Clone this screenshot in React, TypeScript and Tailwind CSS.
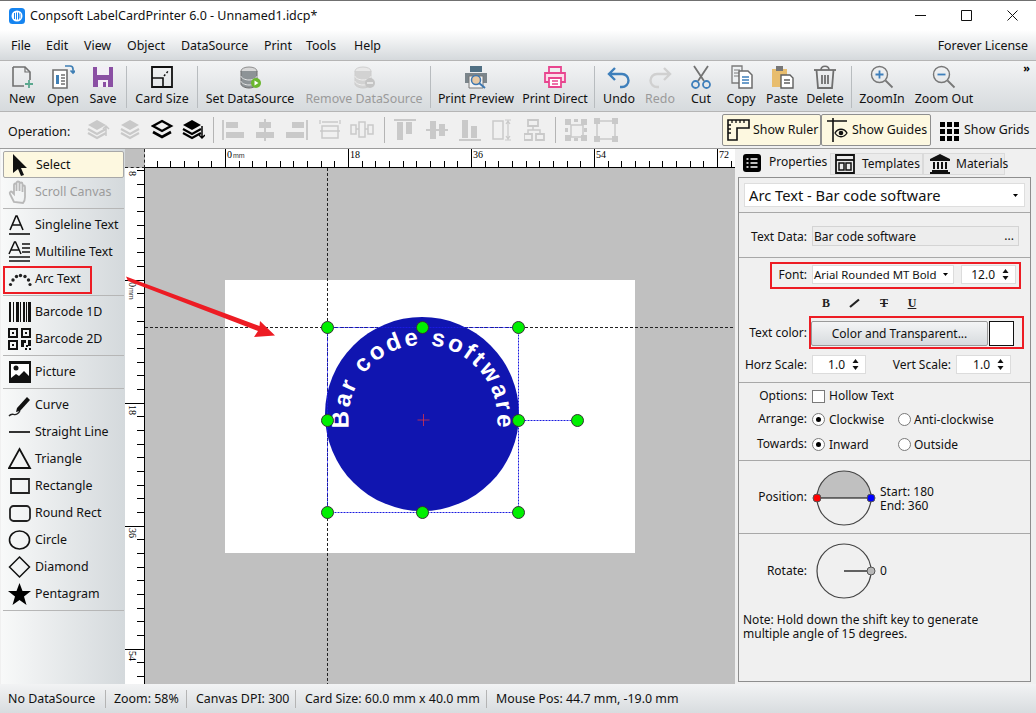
import type { ReactNode } from "react";

const DIS = "#c9c9c9";

function Ico({ w = 24, h = 24, children }: { w?: number; h?: number; children: ReactNode }) {
  return (
    <svg width={w} height={h} viewBox={`0 0 ${w} ${h}`} fill="none" className="shrink-0">
      {children}
    </svg>
  );
}

/* main toolbar icons */
const toolIcons: Record<string, ReactNode> = {
  new: (
    <>
      <path d="M3 2h12l5 5v8M3 2v19h11" stroke="#707070" strokeWidth="1.6" />
      <path d="M15 2v5h5" stroke="#707070" strokeWidth="1.2" />
      <path d="M19 15v8M15 19h8" stroke="#5aa88f" strokeWidth="1.8" />
    </>
  ),
  open: (
    <>
      <path d="M2 5h14v18H2z" fill="#fff" stroke="#707070" strokeWidth="1.6" />
      <path d="M5 10h3v9H5z" fill="#3f7fb5" />
      <path d="M10 10h4M10 13h4M10 16h4M10 19h4" stroke="#707070" strokeWidth="1.3" />
      <path d="M14 1h5c2 0 3 1 3 3v3M19.5 5.5l2.5 2.5 2.5-2.5" stroke="#3f7fb5" strokeWidth="1.7" />
    </>
  ),
  save: (
    <>
      <path d="M2 2h20v20H2z" fill="#8a4fa3" />
      <path d="M6 2h12v8H6z" fill="#f3eef6" />
      <path d="M7 15h10v7H7z" fill="#f3eef6" />
      <path d="M12 17h3v5h-3z" fill="#8a4fa3" />
    </>
  ),
  card: (
    <>
      <path d="M2 2h20v20H2z" stroke="#111" strokeWidth="1.8" />
      <path d="M2 13h11v9" stroke="#111" strokeWidth="1.6" />
      <path d="M14 11l5-6" stroke="#111" strokeWidth="1.5" strokeDasharray="2 2" />
    </>
  ),
  dbOn: (
    <>
      <ellipse cx="11" cy="6" rx="8" ry="4" fill="#d8d8d8" stroke="#8e8e8e" />
      <path d="M3 6v13c0 2 4 4 8 4s8-2 8-4V6" fill="#8d9396" stroke="#6f6f6f" />
      <path d="M3 11c0 2 4 4 8 4s8-2 8-4M3 16c0 2 4 4 8 4s8-2 8-4" stroke="#e6e6e6" />
      <circle cx="18" cy="18" r="5" fill="#6ab72f" />
      <path d="M16.5 15.5l4 2.5-4 2.5z" fill="#fff" />
    </>
  ),
  dbOff: (
    <>
      <ellipse cx="11" cy="6" rx="8" ry="4" fill="#e8e8e8" stroke="#d0d0d0" />
      <path d="M3 6v13c0 2 4 4 8 4s8-2 8-4V6" fill="#d2d2d2" stroke="#cdcdcd" />
      <path d="M3 11c0 2 4 4 8 4s8-2 8-4M3 16c0 2 4 4 8 4s8-2 8-4" stroke="#f0f0f0" />
      <circle cx="18" cy="18" r="5" fill="#c4c4c4" />
      <path d="M15 18h6" stroke="#f2f2f2" strokeWidth="1.5" />
    </>
  ),
  preview: (
    <>
      <path d="M6 1h12v6H6z" fill="#4f6f83" />
      <path d="M1 8h22v10H1z" fill="#7b858b" />
      <path d="M5 11h14v12H5z" fill="#f4f4f4" stroke="#777" />
      <circle cx="12" cy="15" r="4.5" fill="#e7c9a5" stroke="#3f78b0" strokeWidth="1.5" />
      <path d="M15 18l6 5" stroke="#3f78b0" strokeWidth="2" />
    </>
  ),
  direct: (
    <>
      <path d="M6 8V2h12v6" stroke="#e8458f" strokeWidth="1.8" />
      <path d="M6 17H2V8h20v9h-4" stroke="#e8458f" strokeWidth="1.8" fill="#fbdde9" />
      <path d="M6 13h12v9H6z" stroke="#e8458f" strokeWidth="1.8" fill="#fff" />
      <path d="M9 16h6M9 19h6" stroke="#e8458f" strokeWidth="1.3" />
    </>
  ),
  undo: <path d="M8 3L2 9l6 6M2 9h13a6.5 6.5 0 0 1 0 13h-2" stroke="#3e7fbb" strokeWidth="2.4" />,
  redo: <path d="M16 3l6 6-6 6M22 9H9a6.5 6.5 0 0 0 0 13h2" stroke="#d0d0d0" strokeWidth="2.4" />,
  cut: (
    <>
      <path d="M5 1l10 15M19 1L9 16" stroke="#727272" strokeWidth="1.8" />
      <circle cx="6.5" cy="19.5" r="3.5" stroke="#3e7fbb" strokeWidth="1.8" />
      <circle cx="17.5" cy="19.5" r="3.5" stroke="#3e7fbb" strokeWidth="1.8" />
    </>
  ),
  copy: (
    <>
      <path d="M3 1h10v17H3z" fill="#eef1f3" stroke="#7b7b7b" strokeWidth="1.3" />
      <path d="M5 5h6M5 8h6M5 11h6" stroke="#7b7b7b" />
      <path d="M10 6h9l4 4v13H10z" fill="#fff" stroke="#6c6c6c" strokeWidth="1.5" />
      <path d="M13 12h7M13 15h7M13 18h7" stroke="#3e7fbb" strokeWidth="1.4" />
    </>
  ),
  paste: (
    <>
      <path d="M2 4h15v18H2z" fill="#e8bd6e" />
      <path d="M6 1h7v5H6z" fill="#777" />
      <path d="M11 10h9l3 3v10H11z" fill="#fff" stroke="#5f5f5f" strokeWidth="1.4" />
      <path d="M14 15h6M14 18h6" stroke="#5f5f5f" strokeWidth="1.3" />
    </>
  ),
  del: (
    <>
      <path d="M1 5h22" stroke="#6f6f6f" strokeWidth="1.8" />
      <path d="M8 5c0-5 8-5 8 0" stroke="#6f6f6f" strokeWidth="1.6" />
      <path d="M3.5 5L5 23h14l1.5-18" stroke="#6f6f6f" strokeWidth="1.8" />
      <path d="M9 10v9M12 10v9M15 10v9" stroke="#6f6f6f" strokeWidth="1.8" />
    </>
  ),
  zoomIn: (
    <>
      <circle cx="9.5" cy="9.5" r="8" stroke="#777" strokeWidth="1.4" />
      <path d="M9.5 5.5v8M5.5 9.5h8" stroke="#3e7fbb" strokeWidth="1.8" />
      <path d="M15.5 15.5l7 7" stroke="#777" strokeWidth="1.8" />
    </>
  ),
  zoomOut: (
    <>
      <circle cx="9.5" cy="9.5" r="8" stroke="#777" strokeWidth="1.4" />
      <path d="M5.5 9.5h8" stroke="#3e7fbb" strokeWidth="1.8" />
      <path d="M15.5 15.5l7 7" stroke="#777" strokeWidth="1.8" />
    </>
  ),
};

type ToolItem = { label?: string; icon?: string; cls: string; disabled?: boolean };

const tools: ToolItem[] = [
  { label: "New", icon: "new", cls: "w-[36px]" },
  { label: "Open", icon: "open", cls: "w-[46px]" },
  { label: "Save", icon: "save", cls: "w-[34px]" },
  { cls: "w-[12px]" },
  { label: "Card Size", icon: "card", cls: "w-[60px]" },
  { cls: "w-[10px]" },
  { label: "Set DataSource", icon: "dbOn", cls: "w-[96px]" },
  { label: "Remove DataSource", icon: "dbOff", cls: "w-[122px] ml-[5px]", disabled: true },
  { cls: "w-[10px]" },
  { label: "Print Preview", icon: "preview", cls: "w-[82px]" },
  { label: "Print Direct", icon: "direct", cls: "w-[70px] ml-[3px]" },
  { cls: "w-[8px]" },
  { label: "Undo", icon: "undo", cls: "w-[42px]" },
  { label: "Redo", icon: "redo", cls: "w-[40px]", disabled: true },
  { label: "Cut", icon: "cut", cls: "w-[42px]" },
  { label: "Copy", icon: "copy", cls: "w-[38px]" },
  { label: "Paste", icon: "paste", cls: "w-[44px]" },
  { label: "Delete", icon: "del", cls: "w-[42px]" },
  { cls: "w-[10px]" },
  { label: "ZoomIn", icon: "zoomIn", cls: "w-[52px]" },
  { label: "Zoom Out", icon: "zoomOut", cls: "w-[72px]" },
];

/* small operation bar icons, black or greyed */
function layers(c: string) {
  return (
    <>
      <path d="M11 2l9 5-9 5-9-5z" fill={c} />
      <path d="M2 11l9 5 9-5M2 15l9 5 9-5" stroke={c} strokeWidth="2.2" />
    </>
  );
}
const opIcons: ReactNode[] = [
  <>{layers(DIS)}<path d="M20 8v10M17 11l3-3 3 3" stroke={DIS} strokeWidth="1.5" /></>,
  layers(DIS),
  <>
    <path d="M11 3l9 5-9 5-9-5z" stroke="#000" strokeWidth="2.4" />
    <path d="M2 14l9 5 9-5" stroke="#000" strokeWidth="2.6" />
  </>,
  <>{layers("#000")}<path d="M21 8v12M18 17l3 3 3-3" stroke="#000" strokeWidth="1.5" /></>,
  <><path d="M1 2v20" stroke={DIS} strokeWidth="2" /><path d="M4 4h12v6H4zM4 14h18v6H4z" fill={DIS} /></>,
  <><path d="M11 1v22" stroke={DIS} strokeWidth="2" /><path d="M5 4h12v6H5zM2 14h18v6H2z" fill={DIS} /></>,
  <><path d="M21 2v20" stroke={DIS} strokeWidth="2" /><path d="M6 4h12v6H6zM0 14h18v6H0z" fill={DIS} /></>,
  <>
    <path d="M3 8h16v12H3z" stroke={DIS} strokeWidth="1.5" />
    <path d="M1 2v4M21 2v4M3 4h16M1 13h20" stroke={DIS} strokeWidth="1.3" />
  </>,
  <>
    <path d="M1 7h5v9H1zM9 4h6v15H9zM18 7h5v9h-5z" stroke={DIS} strokeWidth="1.5" />
    <path d="M6 11h3M15 11h3" stroke={DIS} strokeWidth="1.5" />
  </>,
  <><path d="M1 2h22" stroke={DIS} strokeWidth="2" /><path d="M4 4h6v18H4zM13 4h6v12h-6z" fill={DIS} /></>,
  <><path d="M1 12h22" stroke={DIS} strokeWidth="2" /><path d="M5 3h6v18H5zM14 6h6v12h-6z" fill={DIS} /></>,
  <><path d="M1 22h22" stroke={DIS} strokeWidth="2" /><path d="M4 2h6v18H4zM13 8h6v12h-6z" fill={DIS} /></>,
  <>
    <path d="M2 3h10v18H2z" stroke={DIS} strokeWidth="1.5" />
    <path d="M17 3v18M15 6l2-3 2 3M15 18l2 3 2-3M14 2h6M14 22h6" stroke={DIS} strokeWidth="1.2" />
  </>,
  <>
    <path d="M4 2h10v6H4zM0 16h8v6H0zM12 16h8v6h-8z" stroke={DIS} strokeWidth="1.8" />
    <path d="M9 8v4M4 16v-4h12v4" stroke={DIS} strokeWidth="1.5" />
  </>,
  <>
    <path d="M7 7h12v12H7z" stroke={DIS} strokeWidth="1.5" />
    <path d="M1 1h6v6H1zM17 1h6v6h-6zM1 17h6v6H1zM17 17h6v6h-6zM10 1h4v3h-4zM10 20h4v3h-4zM1 10h3v4H1zM20 10h3v4h-3z" fill={DIS} />
  </>,
  <>
    <path d="M6 3h12M3 6v12M21 6v12M6 21h12" stroke={DIS} strokeWidth="1.5" />
    <path d="M0 0h6v6H0zM18 0h6v6h-6zM0 18h6v6H0zM18 18h6v6h-6z" fill={DIS} />
  </>,
];
const opMargins = [
  "ml-[15px]", "ml-[9px]", "ml-[8px]", "ml-[6px]",
  "ml-[12px]", "ml-[8px]", "ml-[8px]", "ml-[9px]", "ml-[7px]",
  "ml-[14px]", "ml-[8px]", "ml-[9px]", "ml-[9px]", "ml-[9px]",
  "ml-[11px]", "ml-[6px]",
];

function Sep({ cls }: { cls: string }) {
  return <div className={`w-px bg-[#b4b4b4] shrink-0 ${cls}`} />;
}

function ToolBar() {
  return (
    <div className="relative h-[51px] flex pl-[4px] pt-[4px] bg-gradient-to-b from-[#f3f4f5] to-[#d6dadd] border-b border-[#b5b5b5]">
      {tools.map((t, i) =>
        t.icon ? (
          <div key={i} className={`flex flex-col items-center shrink-0 ${t.cls}`}>
            <Ico>{toolIcons[t.icon]}</Ico>
            <span className={`mt-[1px] leading-[18px] whitespace-nowrap ${t.disabled ? "text-[#9a9a9a]" : "text-[#111]"}`}>
              {t.label}
            </span>
          </div>
        ) : (
          <div key={i} className={`flex justify-center shrink-0 h-[42px] mt-[1px] ${t.cls}`}>
            <div className="w-px bg-[#b8bcbf]" />
          </div>
        ),
      )}
      <span className="absolute right-[6px] top-[1px] text-[11px] leading-[12px] font-bold text-black">»</span>
    </div>
  );
}

function OperationBar() {
  return (
    <div className="h-[37px] flex items-center pl-[8px] bg-[#f0f0f0] border-b border-[#9c9c9c]">
      <span className="w-[63px] shrink-0 pt-[3px]">Operation:</span>
      {opIcons.map((ic, i) => (
        <div key={i} className={`flex items-center shrink-0 ${opMargins[i]}`}>
          {(i === 4 || i === 9 || i === 14) && <Sep cls="h-[26px] -ml-[4px] mr-[8px]" />}
          <Ico>{ic}</Ico>
        </div>
      ))}
      <div className="ml-auto flex items-center h-[32px]">
        <ToggleBtn cls="w-[99px]" label="Show Ruler" active>
          <path d="M1 2h21v8H10v12H1z" stroke="#111" strokeWidth="1.6" />
          <path d="M5 2v3M9 2v3M13 2v3M17 2v3M1 7h3M1 11h3M1 15h3" stroke="#111" strokeWidth="1.3" />
        </ToggleBtn>
        <ToggleBtn cls="w-[110px]" label="Show Guides" active>
          <path d="M7 0v24M1 3h20" stroke="#111" strokeWidth="1.6" />
          <path d="M9 15c3-5 9-5 12 0-3 5-9 5-12 0z" stroke="#111" strokeWidth="1.3" />
          <circle cx="15" cy="15" r="2.3" fill="#111" />
        </ToggleBtn>
        <div className="w-[3px]" />
        <ToggleBtn cls="w-[97px]" label="Show Grids">
          <path d="M2 4h5v5H2zM9 4h5v5H9zM16 4h5v5h-5zM2 11h5v5H2zM9 11h5v5H9zM16 11h5v5h-5zM2 18h5v5H2zM9 18h5v5H9zM16 18h5v5h-5z" fill="#000" />
        </ToggleBtn>
        <div className="w-[5px]" />
      </div>
    </div>
  );
}

function ToggleBtn({ cls, label, active, children }: { cls: string; label: string; active?: boolean; children: ReactNode }) {
  return (
    <div className={`h-[32px] flex items-center pl-[4px] gap-[2px] shrink-0 ${cls} ${active ? "bg-[#fdf8e0] border border-[#8f8f8f] rounded-[2px]" : ""}`}>
      <Ico>{children}</Ico>
      <span className="whitespace-nowrap">{label}</span>
    </div>
  );
}

/* left palette */
type Pal = { label: string; icon: ReactNode; disabled?: boolean; selected?: boolean } | null;

const palette: Pal[] = [
  { label: "Select", selected: true, icon: <path d="M4 1v19l5-4 3 7 3-1-3-7h6z" fill="#111" /> },
  {
    label: "Scroll Canvas",
    disabled: true,
    icon: (
      <path
        d="M6 22l-4-8c-1-2 1-3 2-2l2 2V5c0-2 2.5-2 2.5 0v6-8c0-2 3-2 3 0v8-7c0-2 3-2 3 0v8-5c0-2 2.5-2 2.5 0v10c0 3-1 5-2 6z"
        stroke="#b8b8b8"
        strokeWidth="1.8"
      />
    ),
  },
  null,
  {
    label: "Singleline Text",
    icon: (
      <>
        <path d="M2 17L8 3h1l6 14M4.5 12h9" stroke="#111" strokeWidth="1.6" />
        <path d="M1 21h21" stroke="#111" strokeWidth="1.6" />
      </>
    ),
  },
  {
    label: "Multiline Text",
    icon: (
      <>
        <path d="M1 14L6.5 2h1L13 14M3 10h8" stroke="#111" strokeWidth="1.5" />
        <path d="M14 4h8M14 8h8M14 12h8M1 17h21M1 21h21" stroke="#111" strokeWidth="1.5" />
      </>
    ),
  },
  {
    label: "Arc Text",
    icon: (
      <g fill="#222">
        <circle cx="2.5" cy="17.5" r="1.6" />
        <circle cx="5" cy="13" r="1.7" />
        <circle cx="8.5" cy="9.500" r="1.7" />
        <circle cx="12.5" cy="8.5" r="1.7" />
        <circle cx="17" cy="9.500" r="1.7" />
        <circle cx="20.5" cy="13" r="1.7" />
        <circle cx="22" cy="17.5" r="1.6" />
      </g>
    ),
  },
  null,
  {
    label: "Barcode 1D",
    icon: <path d="M1 2h2v20H1zM5 2h1v20H5zM8 2h3v20H8zM12 2h1v20h-1zM15 2h2v20h-2zM18 2h1v20h-1zM20 2h3v20h-3z" fill="#111" />,
  },
  {
    label: "Barcode 2D",
    icon: (
      <path
        fillRule="evenodd"
        d="M0 1h10v10H0zM2 3v6h6V3zM4 5h2v2H4zM13 1h10v10H13zM15 3v6h6V3zM17 5h2v2h-2zM0 13h10v10H0zM2 15v6h6v-6zM4 17h2v2H4zM13 13h5v3h-2v4h-3zM20 13h3v6h-3zM18 18h2v2h-2zM17 21h2v2h-2zM21 21h2v2h-2z"
        fill="#111"
      />
    ),
  },
  null,
  {
    label: "Picture",
    icon: (
      <>
        <path d="M1 1h22v22H1z" fill="#111" />
        <path d="M3 4h18v12l-5-5-5 5-3-2-5 4z" fill="#fff" />
        <circle cx="8" cy="8" r="2.5" fill="#111" />
      </>
    ),
  },
  null,
  {
    label: "Curve",
    icon: (
      <>
        <path d="M1 23c3-4 5 0 8-2s2-2 3-3" stroke="#222" strokeWidth="1.3" />
        <path d="M9 15L19 4l3 3-10 11-4 1z" fill="#111" />
      </>
    ),
  },
  { label: "Straight Line", icon: <path d="M1 12h21" stroke="#333" strokeWidth="2" /> },
  { label: "Triangle", icon: <path d="M11.5 2L22 21H1z" stroke="#111" strokeWidth="1.8" /> },
  { label: "Rectangle", icon: <path d="M3 5h18v14H3z" stroke="#222" strokeWidth="1.8" /> },
  { label: "Round Rect", icon: <rect x="2" y="5" width="20" height="15" rx="3.5" stroke="#222" strokeWidth="1.8" /> },
  { label: "Circle", icon: <ellipse cx="11.5" cy="12" rx="10" ry="9" stroke="#111" strokeWidth="1.6" /> },
  { label: "Diamond", icon: <path d="M11.5 2l10 10-10 10-10-10z" stroke="#111" strokeWidth="1.5" /> },
  { label: "Pentagram", icon: <path d="M11.5 1l3 8H23l-7 5.5 2.5 8.5-7-5-7 5L7 14.5 0 9h8.5z" fill="#000" /> },
  null,
];

function LeftPalette() {
  return (
    <div className="w-[124px] shrink-0 ml-[1px] pt-[2px] pl-[2px] pr-[1px] bg-gradient-to-r from-[#f8f9f9] to-[#d4d9dc]">
      {palette.map((p, i) =>
        p ? (
          <div
            key={i}
            className={`h-[27px] flex items-center pl-[5px] gap-[3px] whitespace-nowrap ${
              p.selected ? "bg-[#fdf8e0] border border-[#a8a8a8] rounded-[2px] pl-[4px]" : ""
            } ${p.disabled ? "text-[#9c9c9c]" : "text-[#111]"}`}
          >
            <Ico>{p.icon}</Ico>
            <span>{p.label}</span>
          </div>
        ) : (
          <div key={i} className="h-[6px] flex items-center">
            <div className="h-px w-full bg-[#b6b6b6]" />
          </div>
        ),
      )}
    </div>
  );
}

/* rulers: 18mm is 123px on screen, a tick every 2mm */
function TopRuler() {
  const ticks = [];
  for (let i = -6; i < 40; i++) {
    const x = 80 + i * 13.667;
    if (x < 0 || x > 590) continue;
    const major = i % 9 === 0;
    ticks.push(<path key={i} d={`M${Math.round(x) + 0.5} ${major ? 0 : 12}V19`} stroke="#000" />);
  }
  return (
    <svg width="590" height="19" className="block">
      <rect width="590" height="19" fill="#fff" />
      {ticks}
      <path d="M0 18.5H590" stroke="#000" />
      {[["0", 82], ["18", 205], ["36", 328], ["54", 451], ["72", 574]].map(([t, x]) => (
        <text key={t} x={x} y="9" fontSize="10" fontFamily="Liberation Serif, serif" fill="#000">
          {t}
        </text>
      ))}
      <text x="88" y="9" fontSize="7" fontFamily="Liberation Sans, sans-serif" fill="#333">
        mm
      </text>
    </svg>
  );
}

function LeftRuler() {
  const ticks = [];
  for (let i = -8; i < 30; i++) {
    const y = 111.5 + i * 13.667;
    if (y < 0 || y > 516) continue;
    const major = i % 9 === 0;
    ticks.push(<path key={i} d={`M${major ? 0 : 12} ${Math.round(y) + 0.5}H20`} stroke="#000" />);
  }
  return (
    <svg width="20" height="516" className="block">
      <rect width="20" height="516" fill="#fff" />
      {ticks}
      <path d="M19.5 0V516" stroke="#000" />
      {[["8", 3], ["0", 114], ["18", 237], ["36", 360], ["54", 483]].map(([t, y]) => (
        <text
          key={t}
          x="0"
          y="0"
          fontSize="10"
          fontFamily="Liberation Serif, serif"
          fill="#000"
          transform={`translate(4 ${y}) rotate(90)`}
        >
          {t}
        </text>
      ))}
      <text x="0" y="0" fontSize="7" fontFamily="Liberation Sans, sans-serif" fill="#333" transform="translate(4 120) rotate(90)">
        mm
      </text>
    </svg>
  );
}

function Canvas() {
  const hs: [number, number][] = [
    [327.5, 327.5], [422.5, 327.5], [518.5, 327.5],
    [327.5, 420.5], [518.5, 420.5],
    [327.5, 512.5], [422.5, 512.5], [518.5, 512.5],
    [577.5, 420.5],
  ];
  return (
    <div className="relative w-[590px] h-[516px] bg-[#c0c0c0] overflow-hidden">
      {/* white card, placed on the free canvas */}
      <div className="absolute left-[80px] top-[112px] w-[410px] h-[273px] bg-white" />
      {/* coordinates of the drawing are page coordinates */}
      <svg width="590" height="516" viewBox="145 168 590 516" className="absolute inset-0">
        <path d="M327.5 168V684" stroke="#222" strokeDasharray="3 2" />
        <path d="M145 327.5H735" stroke="#222" strokeDasharray="3 2" />
        <circle cx="422" cy="414" r="97" fill="#1015b0" />
        <defs>
          <path id="arc" d="M349 428A74.500 74.500 0 1 1 497 428" />
        </defs>
        <text fontFamily="Liberation Sans, sans-serif" fontWeight="700" fontSize="24" fill="#fff">
          <textPath href="#arc" textLength="250" lengthAdjust="spacing">
            Bar code software
          </textPath>
        </text>
        <path d="M327.5 327.5H518.5V512.5H327.5zM518.5 420.5H577.5" fill="none" stroke="#1a1ae0" strokeDasharray="2 1" />
        <path d="M423.5 414V426M417.5 420H429.5" stroke="#d8344a" strokeWidth="0.8" />
        {hs.map(([x, y]) => (
          <circle key={`${x}-${y}`} cx={x} cy={y} r="6" fill="#00f000" stroke="#333" />
        ))}
      </svg>
    </div>
  );
}

/* right property panel */
function Spin({ value, cls }: { value: string; cls: string }) {
  return (
    <div className={`h-[19px] bg-white border border-[#dcdcdc] flex items-center justify-end pr-[6px] shrink-0 ${cls}`}>
      <span className="mr-[7px]">{value}</span>
      <svg width="7" height="13" viewBox="0 0 7 13">
        <path d="M3.5 1L6.5 5H0.5zM3.5 12L0.5 8H6.5z" fill="#111" />
      </svg>
    </div>
  );
}

function Radio({ on }: { on?: boolean }) {
  return (
    <span className="w-[13px] h-[13px] rounded-full border border-[#7a7a7a] bg-white flex items-center justify-center shrink-0">
      {on && <span className="w-[5px] h-[5px] rounded-full bg-black" />}
    </span>
  );
}

function RadioRow({ label, a, b, cls }: { label: string; a: string; b: string; cls: string }) {
  return (
    <div className={`flex items-center ${cls}`}>
      <span className="w-[68px] text-right shrink-0">{label}</span>
      <span className="ml-[5px]"><Radio on /></span>
      <span className="ml-[4px] w-[68px] shrink-0 whitespace-nowrap pt-[1px]">{a}</span>
      <span className="ml-[1px]"><Radio /></span>
      <span className="ml-[3px] whitespace-nowrap pt-[2px]">{b}</span>
    </div>
  );
}

function PropertyPanel() {
  return (
    <div className="w-[300px] shrink-0 flex flex-col bg-[#f0f0f0] text-[12px]">
      {/* tabs */}
      <div className="h-[26px] flex items-end pt-[1px]">
        <div className="w-[95px] h-[25px] bg-[#f0f0f0] flex items-center pl-[8px] gap-[8px] shrink-0">
          <Ico w={18} h={18}>
            <rect width="18" height="18" rx="3" fill="#000" />
            <path d="M3.5 5h2M3.5 9h2M3.5 13h2M7.5 5h7M7.5 9h7M7.5 13h7" stroke="#fff" strokeWidth="1.6" />
          </Ico>
          <span className="-mt-[2px]">Properties</span>
        </div>
        <div className="w-[93px] h-[22px] bg-[#ebebeb] border border-[#dadada] flex items-center pl-[4px] gap-[7px] shrink-0">
          <Ico w={20} h={20}>
            <path d="M1 1h18v18H1z" stroke="#111" strokeWidth="1.8" />
            <path d="M1 6h18" stroke="#111" strokeWidth="1.8" />
            <path d="M4 9h5v7H4zM11 9h5v7h-5z" stroke="#111" strokeWidth="1.5" />
          </Ico>
          <span>Templates</span>
        </div>
        <div className="w-[82px] h-[22px] bg-[#ebebeb] border border-[#dadada] flex items-center pl-[6px] gap-[6px] shrink-0">
          <Ico w={20} h={20}>
            <path d="M10 0l10 5v2H0V5zM2 16h16v2H2zM0 18h20v2H0z" fill="#111" />
            <path d="M3 8h2v7H3zM7 8h2v7H7zM11 8h2v7h-2zM15 8h2v7h-2z" fill="#111" />
          </Ico>
          <span>Materials</span>
        </div>
      </div>

      {/* bordered body */}
      <div className="ml-[3px] w-[293px] h-[505px] border border-[#8e8e8e] mt-[2px] flex flex-col">
        <div className="h-[35px] px-[5px] pt-[5px] border-b border-[#a8a8a8]">
          <div className="h-[24px] bg-white border border-[#dedede] flex items-center justify-between pl-[4px] pr-[6px]">
            <span className="text-[14.7px]">Arc Text - Bar code software</span>
            <svg width="5" height="3"><path d="M0 0h5L2.5 3z" fill="#000" /></svg>
          </div>
        </div>

        <div className="h-[45px] flex items-center border-b border-[#a8a8a8] pt-[3px]">
          <span className="w-[68px] text-right shrink-0 pt-[1px]">Text Data:</span>
          <div className="ml-[5px] w-[207px] h-[20px] bg-[#ededed] border border-[#d4d4d4] flex items-center justify-between pl-[1px] pr-[4px] -mt-[2px]">
            <span className="pt-[2px]">Bar code software</span>
            <span className="leading-[12px]">...</span>
          </div>
        </div>

        <div className="h-[125px] border-b border-[#a8a8a8] pt-[7px]">
          <div className="flex items-center h-[19px]">
            <span className="w-[68px] text-right shrink-0">Font:</span>
            <div className="ml-[5px] w-[142px] h-[19px] bg-white border border-[#dcdcdc] flex items-center justify-between pl-[1px] pr-[5px]">
              <span className="whitespace-nowrap text-[11.4px]">Arial Rounded MT Bold</span>
              <svg width="5" height="3"><path d="M0 0h5L2.5 3z" fill="#000" /></svg>
            </div>
            <Spin value="12.0" cls="ml-[7px] w-[55px]" />
          </div>
          <div className="flex items-center h-[18px] ml-[82px] mt-[10px] gap-[18px] text-[#222]">
            <span className="w-[10px] font-['Liberation_Serif'] font-bold text-center">B</span>
            <svg width="12" height="10" viewBox="0 0 12 10"><path d="M1 9L10 1.5" stroke="#222" strokeWidth="2.2" /></svg>
            <span className="w-[10px] font-['Liberation_Serif'] font-bold text-center line-through">T</span>
            <span className="w-[10px] font-['Liberation_Serif'] font-bold text-center underline">U</span>
          </div>
          <div className="flex items-center h-[26px] mt-[8px]">
            <span className="w-[68px] text-right shrink-0">Text color:</span>
            <div className="ml-[4px] w-[177px] h-[25px] rounded-[2px] border border-[#9a9a9a] bg-gradient-to-b from-[#f4f5f6] to-[#d7dbde] flex items-center justify-center pt-[2px]">
              Color and Transparent...
            </div>
            <div className="ml-[1px] w-[25px] h-[25px] bg-white border border-[#111]" />
          </div>
          <div className="flex items-center h-[19px] mt-[9px]">
            <span className="w-[68px] text-right shrink-0">Horz Scale:</span>
            <Spin value="1.0" cls="ml-[5px] w-[54px]" />
            <span className="w-[85px] text-right shrink-0">Vert Scale:</span>
            <Spin value="1.0" cls="ml-[5px] w-[55px]" />
          </div>
        </div>

        <div className="h-[78px] border-b border-[#a8a8a8] pt-[4px]">
          <div className="flex items-center h-[18px]">
            <span className="w-[68px] text-right shrink-0">Options:</span>
            <span className="ml-[5px] w-[13px] h-[13px] bg-white border border-[#7a7a7a] shrink-0" />
            <span className="ml-[4px]">Hollow Text</span>
          </div>
          <RadioRow label="Arrange:" a="Clockwise" b="Anti-clockwise" cls="h-[18px] mt-[5px]" />
          <RadioRow label="Towards:" a="Inward" b="Outside" cls="h-[18px] mt-[7px]" />
        </div>

        <div className="h-[73px] border-b border-[#a8a8a8] flex items-center">
          <span className="w-[68px] text-right shrink-0">Position:</span>
          <svg width="70" height="60" viewBox="0 0 70 60" className="ml-[2px] mt-[2px] shrink-0">
            <path d="M8 30a27 27 0 0 1 54 0z" fill="#c0c0c0" />
            <circle cx="35" cy="30" r="27" stroke="#444" strokeWidth="1.2" fill="none" />
            <path d="M8 30H62" stroke="#000" strokeWidth="1.2" />
            <circle cx="8" cy="30" r="4" fill="#f00" stroke="#555" />
            <circle cx="62" cy="30" r="4" fill="#00f" stroke="#555" />
          </svg>
          <div className="leading-[14px] ml-[1px] pt-[4px]">
            <div>Start: 180</div>
            <div>End: 360</div>
          </div>
        </div>

        <div className="flex items-center h-[73px]">
          <span className="w-[68px] text-right shrink-0">Rotate:</span>
          <svg width="70" height="60" viewBox="0 0 70 60" className="ml-[2px] shrink-0">
            <circle cx="35" cy="30" r="27" stroke="#444" strokeWidth="1.2" fill="none" />
            <path d="M35 30H62" stroke="#000" strokeWidth="1.2" />
            <circle cx="62" cy="30" r="4" fill="#b8b8b8" stroke="#555" />
          </svg>
          <span className="ml-[1px]">0</span>
        </div>

        <div className="px-[4px] leading-[14px] mt-[6px]">
          Note: Hold down the shift key to generate
          <br />
          multiple angle of 15 degrees.
        </div>
      </div>
    </div>
  );
}

function StatusBar() {
  return (
    <div className="h-[29px] flex items-center bg-gradient-to-b from-[#f2f3f4] to-[#d8dcdf]">
      {[
        ["No DataSource", "w-[106px] pl-[8px]"],
        ["Zoom: 58%", "w-[81px] pl-[8px]"],
        ["Canvas DPI: 300", "w-[109px] pl-[9px]"],
        ["Card Size: 60.0 mm x 40.0 mm", "w-[191px] pl-[9px]"],
        ["Mouse Pos: 44.7 mm, -19.0 mm", "pl-[9px]"],
      ].map(([t, c], i) => (
        <div key={t} className={`h-[18px] flex items-center whitespace-nowrap ${c} ${i < 4 ? "border-r border-[#b4b4b4]" : ""}`}>
          {t}
        </div>
      ))}
    </div>
  );
}

export default function App() {
  return (
    <div className="relative w-[1036px] h-[713px] overflow-hidden bg-[#f0f0f0] text-[#111] font-['Noto_Sans',sans-serif] text-[12.4px] leading-[16px] border-t border-[#707070]">
      {/* title bar */}
      <div className="h-[29px] bg-white flex items-center pl-[9px]">
        <svg width="16" height="16" viewBox="0 0 16 16" className="shrink-0">
          <rect width="16" height="16" rx="3.5" fill="#1584f0" />
          <circle cx="8" cy="8" r="5.5" fill="#fff" />
          <path d="M5.5 5v6M7.5 4.5v7M9.5 4.5v7M11 5.5v5" stroke="#1584f0" />
        </svg>
        <span className="ml-[5px] text-[12.5px]">Conpsoft LabelCardPrinter 6.0 - Unnamed1.idcp*</span>
        <div className="ml-auto flex items-center gap-[35px] pr-[18px]">
          <svg width="11" height="11"><path d="M0 5.5H11" stroke="#111" /></svg>
          <svg width="11" height="11"><path d="M.5 .5h10v10H.5z" stroke="#111" fill="none" /></svg>
          <svg width="11" height="11"><path d="M.5 .5l10 10M10.5 .5l-10 10" stroke="#111" fill="none" /></svg>
        </div>
      </div>

      {/* menu */}
      <div className="h-[31px] flex items-center pl-[11px] pt-[2px] bg-gradient-to-b from-white to-[#d5d9dc] border-b border-[#b5b5b5]">
        {[
          ["File", "w-[35px]"], ["Edit", "w-[38px]"], ["View", "w-[43px]"], ["Object", "w-[54px]"],
          ["DataSource", "w-[83px]"], ["Print", "w-[42px]"], ["Tools", "w-[48px]"], ["Help", "w-[40px]"],
        ].map(([m, c]) => (
          <span key={m} className={`shrink-0 ${c}`}>{m}</span>
        ))}
        <span className="ml-auto pr-[8px]">Forever License</span>
      </div>

      <ToolBar />
      <OperationBar />

      {/* workspace */}
      <div className="flex h-[535px]">
        <LeftPalette />
        <div className="w-[610px] shrink-0 flex flex-col bg-[#c0c0c0]">
          <div className="flex h-[19px]">
            <div className="w-[20px] h-[19px] bg-[#c0c0c0] border-r border-b border-dashed border-[#222]" />
            <TopRuler />
          </div>
          <div className="flex">
            <LeftRuler />
            <Canvas />
          </div>
        </div>
        <PropertyPanel />
      </div>

      <StatusBar />

      {/* red annotations over the screenshot */}
      <div className="absolute left-[3px] top-[265px] w-[89px] h-[28px] border-2 border-[#ed1c24]" />
      <div className="absolute left-[770px] top-[261px] w-[251px] h-[27px] border-2 border-[#ed1c24]" />
      <div className="absolute left-[809px] top-[315px] w-[215px] h-[33px] border-2 border-[#ed1c24]" />
      <svg width="1036" height="713" className="absolute left-0 -top-px pointer-events-none">
        <path d="M126 276.5L128 281L258 331L254 337L275 335.5L260 321L259.5 326Z" fill="#ed1c24" />
      </svg>
    </div>
  );
}
